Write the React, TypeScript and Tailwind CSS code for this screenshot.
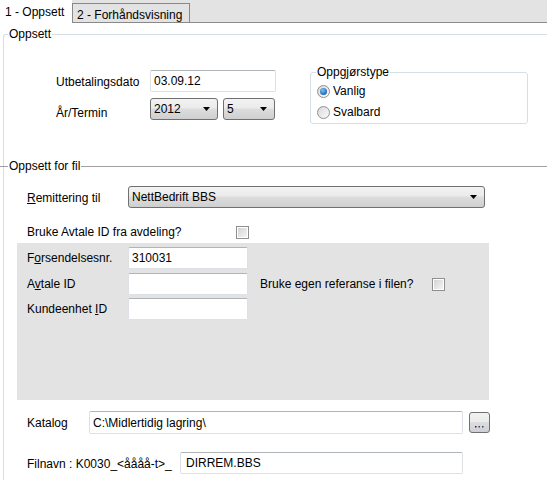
import React from "react";

const inputCls =
  "h-[22px] bg-white border border-[#dde1e6] border-t-[#b0b5ba] rounded-[2px] pl-[3px] flex items-center text-[12px] text-black";

function Select({ value, w }: { value: string; w: string }) {
  return (
    <div
      className={`${w} h-[22px] border border-[#707070] rounded-[3px] flex items-center justify-between pl-[3px] pr-[7px] bg-[linear-gradient(#f2f2f2_0%,#ebebeb_45%,#dddddd_50%,#cfcfcf_100%)]`}
    >
      <span>{value}</span>
      <svg width="7" height="4" viewBox="0 0 7 4">
        <path d="M0 0h7L3.5 4z" fill="#000" />
      </svg>
    </div>
  );
}

function Checkbox() {
  return (
    <div className="w-[13px] h-[13px] border border-[#8f8f8f] bg-white p-[1px]">
      <div className="w-full h-full bg-[linear-gradient(135deg,#d4d4d4,#f4f4f4)]" />
    </div>
  );
}

function Radio({ checked }: { checked?: boolean }) {
  return (
    <div className="w-[13px] h-[13px] rounded-full border border-[#8e8f8f] bg-[linear-gradient(135deg,#d8d8d8,#fbfbfb)] flex items-center justify-center">
      {checked && (
        <div className="w-[7px] h-[7px] rounded-full bg-[radial-gradient(circle_at_40%_35%,#7cc4f5,#1d69b8_70%,#134c8a)]" />
      )}
    </div>
  );
}

export default function App() {
  return (
    <div
      className="w-[547px] h-[480px] bg-white overflow-hidden text-[12px] text-black leading-[14px]"
      style={{ fontFamily: '"Liberation Sans", Arial, sans-serif' }}
    >
      {/* Tabs */}
      <div className="flex h-[23px] bg-[#e3e3e3]">
        <div className="w-[72px] bg-white pl-[5px] pt-[5px]">1 - Oppsett</div>
        <div className="self-end h-[20px] w-[118px] border border-[#898989] bg-[#e3e3e3] pl-[4px] pt-[4px]">
          2 - Forhåndsvisning
        </div>
        <div className="flex-1 border-b border-[#8c8c8c]" />
      </div>

      <fieldset className="mt-[4px] ml-[3px] border-t border-l border-[#d5dfe5] rounded-tl-[3px] min-w-0">
        <legend className="ml-[4px] px-[1px]">Oppsett</legend>

        <div className="flex items-start">
          <div className="mt-[29px] ml-[52px] flex flex-col gap-[5px]">
            <div className="flex items-center">
              <span className="w-[94px] pt-[2px]">Utbetalingsdato</span>
              <div className={`${inputCls} w-[126px]`}>03.09.12</div>
            </div>
            <div className="flex items-center">
              <span className="w-[94px] pt-[9px]">År/Termin</span>
              <Select value="2012" w="w-[68px]" />
              <div className="ml-[5px]">
                <Select value="5" w="w-[52px]" />
              </div>
            </div>
          </div>

          <fieldset className="mt-[24px] ml-[34px] w-[218px] h-[59px] border border-[#d5dfe5] rounded-[3px] pl-[6px]">
            <legend className="px-[1px] -ml-[1px]">Oppgjørstype</legend>
            <div className="flex items-center gap-[3px] mt-[5px]">
              <Radio checked />
              <span>Vanlig</span>
            </div>
            <div className="flex items-center gap-[3px] mt-[7px]">
              <Radio />
              <span>Svalbard</span>
            </div>
          </fieldset>
        </div>

        {/* Oppsett for fil separator */}
        <div className="flex items-center -ml-[4px] mt-[35px]">
          <div className="w-[8px] border-t border-[#a0a0a0]" />
          <span className="px-[1px]">Oppsett for fil</span>
          <div className="flex-1 border-t border-[#a0a0a0]" />
        </div>

        <div className="flex items-center ml-[23px] mt-[13px]">
          <span className="w-[101px] pt-[1px]">
            <span className="underline">R</span>emittering til
          </span>
          <Select value="NettBedrift BBS" w="w-[357px]" />
        </div>

        <div className="flex items-center ml-[23px] mt-[17px] h-[14px]">
          <span className="w-[209px]">Bruke Avtale ID fra avdeling?</span>
          <Checkbox />
        </div>

        {/* Gray panel */}
        <div className="ml-[13px] mt-[4px] w-[472px] h-[157px] bg-[#e3e3e3] pl-[10px] pt-[4px]">
          <div className="flex items-center">
            <span className="w-[101px]">
              F<span className="underline">o</span>rsendelsesnr.
            </span>
            <div className={`${inputCls} w-[120px] h-[21px]`}>310031</div>
          </div>
          <div className="flex items-center mt-[4px]">
            <span className="w-[101px]">
              A<span className="underline">v</span>tale ID
            </span>
            <div className={`${inputCls} w-[120px] h-[21px]`} />
            <span className="ml-[12px] w-[172px]">Bruke egen referanse i filen?</span>
            <Checkbox />
          </div>
          <div className="flex items-center mt-[3px]">
            <span className="w-[101px]">
              Kundeenhet <span className="underline">I</span>D
            </span>
            <div className={`${inputCls} w-[120px] h-[21px]`} />
          </div>
        </div>

        <div className="flex items-center ml-[23px] mt-[11px]">
          <span className="w-[62px]">Katalog</span>
          <div className={`${inputCls} w-[374px] h-[23px]`}>C:\Midlertidig lagring\</div>
          <div className="ml-[6px] w-[21px] h-[21px] border border-[#707070] rounded-[3px] bg-[linear-gradient(#f2f2f2_0%,#ebebeb_45%,#dddddd_50%,#cfcfcf_100%)] flex items-end justify-center pb-[4px]">
            <svg width="9" height="2" viewBox="0 0 9 2">
              <rect x="0" y="0" width="1.5" height="1.5" fill="#1a1a8a" />
              <rect x="3.5" y="0" width="1.5" height="1.5" fill="#8a1a6a" />
              <rect x="7" y="0" width="1.5" height="1.5" fill="#1a4a8a" />
            </svg>
          </div>
        </div>

        <div className="flex items-center ml-[23px] mt-[18px]">
          <span className="w-[153px] pt-[2px]">Filnavn : K0030_&lt;åååå-t&gt;_</span>
          <div className={`${inputCls} w-[283px] pl-[5px]`}>DIRREM.BBS</div>
        </div>
        <div className="h-[20px]" />
      </fieldset>
    </div>
  );
}
